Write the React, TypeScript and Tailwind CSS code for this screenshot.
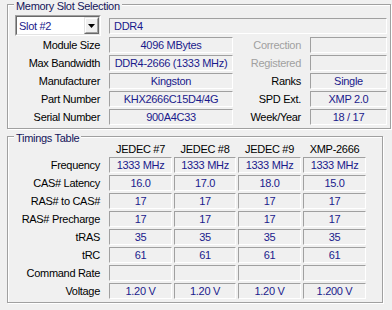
import React from "react";

const FIELD =
  "h-[16px] shrink-0 border border-t-[#a0a0a0] border-l-[#a0a0a0] border-b-white border-r-white flex items-center leading-[14px] whitespace-nowrap overflow-hidden text-[#1a1a8c]";

function Field({ w, children, left }: { w: string; children?: React.ReactNode; left?: boolean }) {
  return (
    <div className={`${FIELD} ${w} ${left ? "justify-start pl-[4px]" : "justify-center"}`}>
      {children}
    </div>
  );
}

function Group({
  title,
  cls,
  children,
}: {
  title: string;
  cls: string;
  children: React.ReactNode;
}) {
  return (
    <div
      className={`relative shrink-0 border border-[#a0a0a0] shadow-[inset_1px_1px_0_#fff,1px_1px_0_#fff] ${cls}`}
    >
      <span className="absolute left-[6px] top-[-6px] px-[2px] bg-[#f0f0f0] leading-[14px] text-[#14145a]">
        {title}
      </span>
      {children}
    </div>
  );
}

function Combo() {
  return (
    <div className="w-[86px] h-[21px] shrink-0 border border-t-[#a0a0a0] border-l-[#a0a0a0] border-b-white border-r-white">
      <div className="w-full h-full bg-white border border-t-[#696969] border-l-[#696969] border-b-[#e3e3e3] border-r-[#e3e3e3] flex items-center justify-between">
        <span className="pl-[2px] leading-[14px] text-[#1a1a8c]">Slot #2</span>
        <div className="w-[15px] h-[17px] border border-t-[#e3e3e3] border-l-[#e3e3e3] border-b-[#696969] border-r-[#696969]">
          <div className="w-full h-full bg-[#f0f0f0] border border-t-white border-l-white border-b-[#a0a0a0] border-r-[#a0a0a0] flex items-center justify-center">
            <svg width="7" height="4" viewBox="0 0 7 4">
              <path d="M0 0H7L3.5 4Z" fill="#000" />
            </svg>
          </div>
        </div>
      </div>
    </div>
  );
}

const slotRows: [string, string, string, string, boolean][] = [
  ["Module Size", "4096 MBytes", "Correction", "", true],
  ["Max Bandwidth", "DDR4-2666 (1333 MHz)", "Registered", "", true],
  ["Manufacturer", "Kingston", "Ranks", "Single", false],
  ["Part Number", "KHX2666C15D4/4G", "SPD Ext.", "XMP 2.0", false],
  ["Serial Number", "900A4C33", "Week/Year", "18 / 17", false],
];

const colW = ["w-[63px]", "w-[62px]", "w-[63px]", "w-[63px]"];
const headers = ["JEDEC #7", "JEDEC #8", "JEDEC #9", "XMP-2666"];
const timings: [string, string[]][] = [
  ["Frequency", ["1333 MHz", "1333 MHz", "1333 MHz", "1333 MHz"]],
  ["CAS# Latency", ["16.0", "17.0", "18.0", "15.0"]],
  ["RAS# to CAS#", ["17", "17", "17", "17"]],
  ["RAS# Precharge", ["17", "17", "17", "17"]],
  ["tRAS", ["35", "35", "35", "35"]],
  ["tRC", ["61", "61", "61", "61"]],
  ["Command Rate", ["", "", "", ""]],
  ["Voltage", ["1.20 V", "1.20 V", "1.20 V", "1.200 V"]],
];

export default function App() {
  return (
    <div className="w-[392px] h-[310px] overflow-hidden bg-[#f0f0f0] pl-[7px] pt-[4px] flex flex-col font-['Liberation_Sans',Arial,sans-serif] text-[11px] tracking-[-0.3px] text-black">
      <Group title="Memory Slot Selection" cls="w-[384px] h-[125px] pt-[10px] pl-[7px]">
        <div className="flex items-center h-[21px]">
          <Combo />
          <div className="ml-[8px]">
            <Field w="w-[278px]" left>
              DDR4
            </Field>
          </div>
        </div>
        <div className="mt-[1px] flex flex-col gap-[2px]">
          {slotRows.map(([l1, v1, l2, v2, dis]) => (
            <div key={l1} className="flex items-center h-[16px]">
              <div className="w-[85px] text-right leading-[14px] whitespace-nowrap">{l1}</div>
              <div className="ml-[9px]">
                <Field w="w-[124px]">{v1}</Field>
              </div>
              <div
                className={`w-[68px] text-right leading-[14px] whitespace-nowrap ${dis ? "text-[#a0a0a0]" : "text-black"}`}
              >
                {l2}
              </div>
              <div className="ml-[9px]">
                <Field w="w-[77px]">{v2}</Field>
              </div>
            </div>
          ))}
        </div>
      </Group>

      <Group title="Timings Table" cls="mt-[7px] w-[376px] h-[167px] pt-[5px] pl-[7px]">
        <div className="flex h-[14px] items-center">
          <div className="w-[85px]" />
          <div className="ml-[9px] flex gap-[2px]">
            {headers.map((h, i) => (
              <div key={h} className={`${colW[i]} text-center leading-[14px] whitespace-nowrap`}>
                {h}
              </div>
            ))}
          </div>
        </div>
        <div className="mt-[1px] flex flex-col gap-[2px]">
          {timings.map(([label, vals]) => (
            <div key={label} className="flex items-center h-[16px]">
              <div className="w-[85px] text-right leading-[14px] whitespace-nowrap">{label}</div>
              <div className="ml-[9px] flex gap-[2px]">
                {vals.map((v, i) => (
                  <Field key={i} w={colW[i]}>
                    {v}
                  </Field>
                ))}
              </div>
            </div>
          ))}
        </div>
      </Group>
    </div>
  );
}
